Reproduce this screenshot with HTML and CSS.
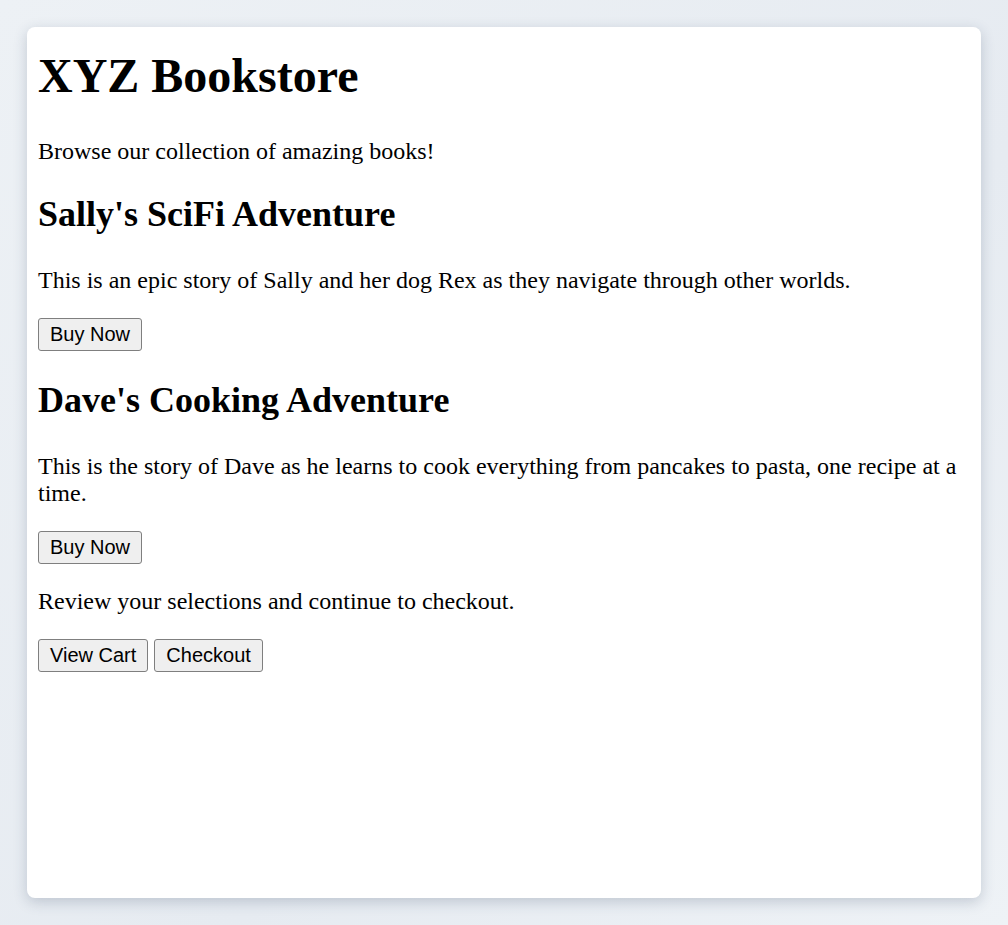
FILE: index.html
```html
<!DOCTYPE html>
<html lang="en">
<head>
    <meta charset="UTF-8">
    <meta name="viewport" content="width=device-width, initial-scale=1.0">
    <title>XYZ Bookstore</title>
    <link rel="stylesheet" href="styles.css">
</head>
<body>
    <div class="page">
        <h1>XYZ Bookstore</h1>
        <p>Browse our collection of amazing books!</p>

        <div class="book">
            <h2>Sally's SciFi Adventure</h2>
            <p>This is an epic story of Sally and her dog Rex as they navigate through other worlds.</p>
            <button>Buy Now</button>
        </div>

        <div class="book">
            <h2>Dave's Cooking Adventure</h2>
            <p>This is the story of Dave as he learns to cook everything from pancakes to pasta, one recipe at a time.</p>
            <button>Buy Now</button>
        </div>

        <p>Review your selections and continue to checkout.</p>
        <button>View Cart</button>
        <button>Checkout</button>
    </div>
</body>
</html>
```

FILE: styles.css
```css
html, body {
    height: 100%;
}

body {
    margin: 0;
    padding: 27px;
    box-sizing: border-box;
    background: linear-gradient(135deg, #edf1f5 0%, #e6ebf1 60%, #eef2f6 100%);
    font-family: "Liberation Serif", "Times New Roman", serif;
    font-size: 24px;
    color: #000;
}

.page {
    height: 100%;
    box-sizing: border-box;
    padding: 11px;
    background-color: #fff;
    border-radius: 8px;
    box-shadow: 0 4px 14px rgba(40, 60, 90, 0.22);
}

h1 {
    font-size: 48px;
    margin: 10px 0 35px;
}

h2 {
    font-size: 36px;
    margin: 28px 0 32px;
}

p {
    margin: 24px 0;
}

button {
    font-family: "Liberation Sans", Arial, sans-serif;
    font-size: 20px;
    color: #000;
    background-color: #efefef;
    border: 1px solid #7f7f7f;
    border-radius: 3px;
    padding: 4px 11px;
    margin: 0;
}
```
